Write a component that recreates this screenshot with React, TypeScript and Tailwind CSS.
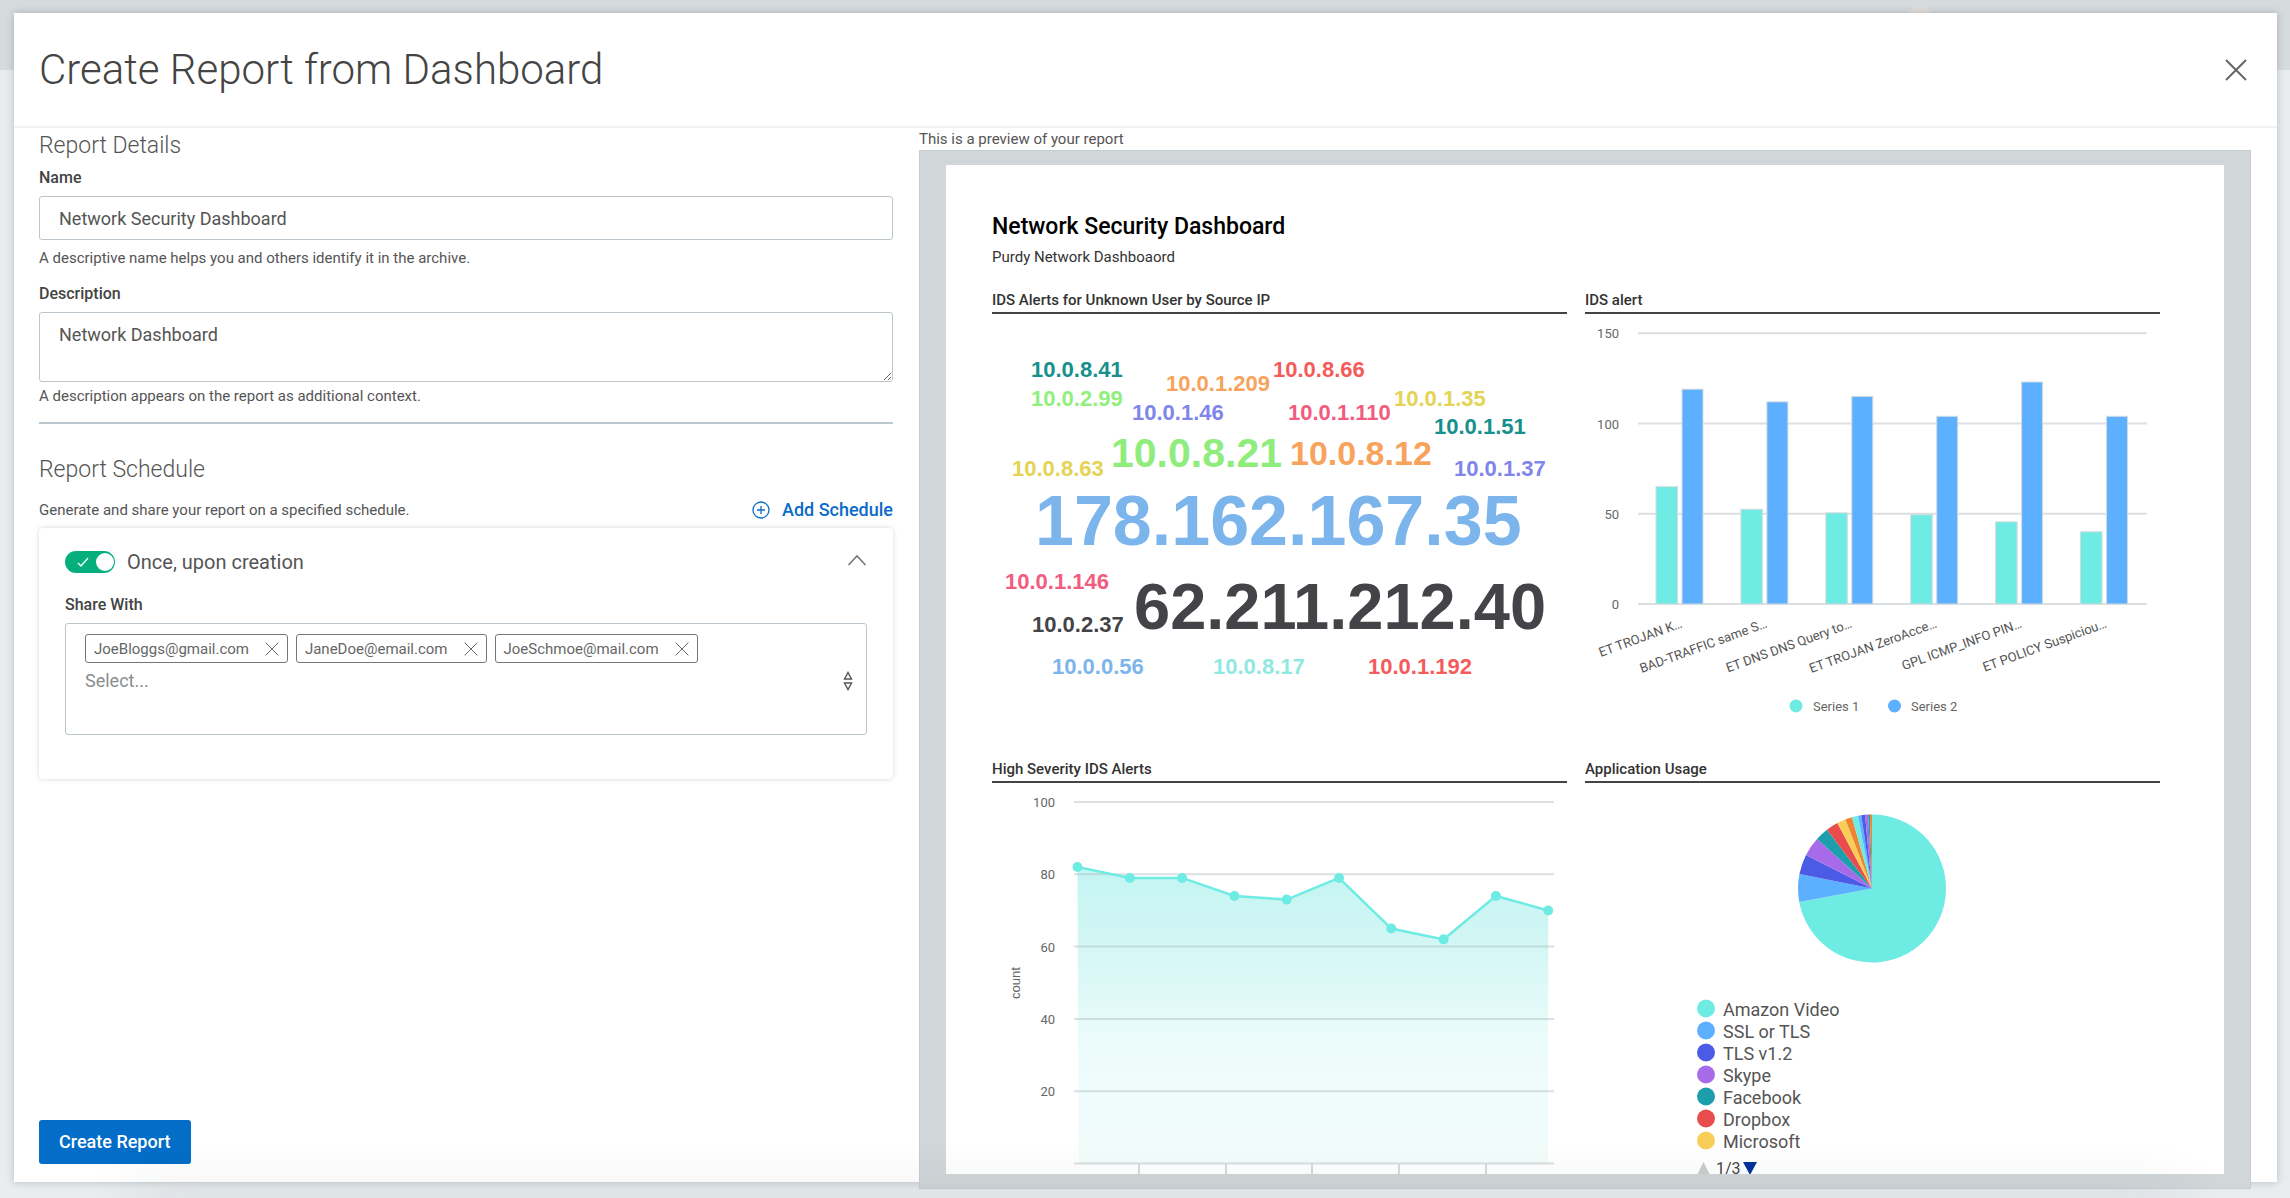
import { useState } from "react";
import type { KeyboardEvent, ReactNode } from "react";

type Word = { text: string; x: number; y: number; size: number; color: string };

const words: Word[] = [
  { text: "10.0.8.41", x: 39, y: 63, size: 22, color: "#15908c" },
  { text: "10.0.2.99", x: 39, y: 92, size: 22, color: "#8ff07d" },
  { text: "10.0.1.209", x: 174, y: 77, size: 22, color: "#f7a35c" },
  { text: "10.0.8.66", x: 281, y: 63, size: 22, color: "#f45b5b" },
  { text: "10.0.1.46", x: 140, y: 106, size: 22, color: "#8085e9" },
  { text: "10.0.1.110", x: 296, y: 106, size: 22, color: "#f15c80" },
  { text: "10.0.1.35", x: 402, y: 92, size: 22, color: "#e4d354" },
  { text: "10.0.1.51", x: 442, y: 120, size: 22, color: "#15908c" },
  { text: "10.0.8.21", x: 119, y: 153, size: 41, color: "#90ed7d" },
  { text: "10.0.8.12", x: 298, y: 151, size: 34, color: "#f7a35c" },
  { text: "10.0.8.63", x: 20, y: 162, size: 22, color: "#e4d354" },
  { text: "10.0.1.37", x: 462, y: 162, size: 22, color: "#8085e9" },
  { text: "178.162.167.35", x: 43, y: 231, size: 70, color: "#7cb5ec" },
  { text: "10.0.1.146", x: 13, y: 275, size: 22, color: "#f15c80" },
  { text: "10.0.2.37", x: 40, y: 318, size: 22, color: "#434348" },
  { text: "62.211.212.40", x: 142, y: 315, size: 65, color: "#434348" },
  { text: "10.0.0.56", x: 60, y: 360, size: 22, color: "#7cb5ec" },
  { text: "10.0.8.17", x: 221, y: 360, size: 22, color: "#91e8e1" },
  { text: "10.0.1.192", x: 376, y: 360, size: 22, color: "#f45b5b" },
];

const alerts = [
  { label: "ET TROJAN K…", first: 65, second: 119 },
  { label: "BAD-TRAFFIC same S…", first: 52.5, second: 112 },
  { label: "ET DNS DNS Query to…", first: 50.5, second: 115 },
  { label: "ET TROJAN ZeroAcce…", first: 49.5, second: 104 },
  { label: "GPL ICMP_INFO PIN…", first: 45.5, second: 123 },
  { label: "ET POLICY Suspiciou…", first: 40, second: 104 },
];

const counts = [82, 79, 79, 74, 73, 79, 65, 62, 74, 70];

// end angle of every slice, clockwise from 12 o'clock
const slices = [
  { end: 259.5, color: "#6eebe3" },
  { end: 281.3, color: "#5cb0ff" },
  { end: 296.9, color: "#4b5be6" },
  { end: 312, color: "#a76bea" },
  { end: 322.5, color: "#1c9eac" },
  { end: 332.1, color: "#e84c4c" },
  { end: 338.9, color: "#f9ce58" },
  { end: 344.3, color: "#ef8534" },
  { end: 349.1, color: "#6eebe3" },
  { end: 351.7, color: "#5cb0ff" },
  { end: 354.6, color: "#4b5be6" },
  { end: 357, color: "#a76bea" },
  { end: 358.4, color: "#1c9eac" },
  { end: 360, color: "#ef8534" },
];

const apps = [
  { name: "Amazon Video", color: "#6eebe3" },
  { name: "SSL or TLS", color: "#5cb0ff" },
  { name: "TLS v1.2", color: "#4b5be6" },
  { name: "Skype", color: "#a76bea" },
  { name: "Facebook", color: "#1c9eac" },
  { name: "Dropbox", color: "#e84c4c" },
  { name: "Microsoft", color: "#f9ce58" },
];

function WordCloud() {
  return (
    <svg viewBox="0 0 575 445" className="w-full block font-['Liberation_Sans',Arial,sans-serif] font-bold">
      {words.map((w) => (
        <text key={w.text} x={w.x} y={w.y} fontSize={w.size} fill={w.color}>
          {w.text}
        </text>
      ))}
    </svg>
  );
}

function BarChart() {
  const y = (v: number) => 290 - v * 1.805;

  return (
    <svg viewBox="0 0 575 445" className="w-full block" fontSize={13}>
      {[150, 100, 50, 0].map((v) => (
        <g key={v}>
          <line x1={53} x2={562} y1={y(v)} y2={y(v)} stroke="#dbdfe1" strokeWidth={2} />
          <text x={34} y={y(v) + 5} textAnchor="end" fill="#666">{v}</text>
        </g>
      ))}
      {alerts.map((a, i) => {
        const x = 71 + i * 84.9;
        return (
          <g key={a.label}>
            <rect x={x} y={y(a.first)} width={21.5} height={y(0) - y(a.first)} fill="#6eebe3" stroke="#d5dbdd" />
            <rect x={x + 26} y={y(a.second)} width={21} height={y(0) - y(a.second)} fill="#5cb0ff" stroke="#d5dbdd" />
            <text textAnchor="end" fill="#555" transform={`translate(${x + 27} 313) rotate(-20)`}>
              {a.label}
            </text>
          </g>
        );
      })}
      <circle cx={211} cy={392} r={6.5} fill="#6eebe3" />
      <text x={228} y={397} fill="#666">Series 1</text>
      <circle cx={309.5} cy={392} r={6.5} fill="#5cb0ff" />
      <text x={326} y={397} fill="#666">Series 2</text>
    </svg>
  );
}

function LineChart() {
  const y = (v: number) => 380.5 - v * 3.615;
  const points = counts.map((c, i) => [85.5 + i * 52.3, y(c)]);
  const line = points.map((p) => p.join(",")).join(" ");

  return (
    <svg viewBox="0 0 575 445" className="w-full block" fontSize={13}>
      <defs>
        <linearGradient id="area" x1="0" y1="0" x2="0" y2="1">
          <stop offset="0" stopColor="#c3f5f2" />
          <stop offset="0.25" stopColor="#d2f6f4" />
          <stop offset="0.6" stopColor="#ecfcfb" />
          <stop offset="1" stopColor="#f2fcfb" />
        </linearGradient>
      </defs>
      <polygon points={`86.5,380.5 ${line} 556.2,380.5`} fill="url(#area)" />
      {[100, 80, 60, 40, 20, 0].map((v) => (
        <g key={v}>
          <line x1={82} x2={562} y1={y(v)} y2={y(v)} stroke="#a9b6ba" strokeOpacity={0.42} strokeWidth={2} />
          <text x={63} y={y(v) + 5} textAnchor="end" fill="#666">{v > 0 ? v : ""}</text>
        </g>
      ))}
      {[147, 234, 320, 407, 494].map((x) => (
        <line key={x} x1={x} x2={x} y1={381} y2={400} stroke="#d5dbdd" strokeWidth={2} />
      ))}
      <polyline points={line} fill="none" stroke="#6eebe3" strokeWidth={2.5} />
      {points.map(([px, py]) => (
        <circle key={px} cx={px} cy={py} r={5} fill="#6eebe3" />
      ))}
      <text
        textAnchor="middle"
        fill="#666"
        transform="translate(28 200) rotate(-90)"
        className="font-['Liberation_Sans',Arial,sans-serif]"
      >
        count
      </text>
    </svg>
  );
}

function PieChart() {
  const point = (deg: number) => {
    const rad = (deg * Math.PI) / 180;
    return `${287 + 74 * Math.sin(rad)} ${105.5 - 74 * Math.cos(rad)}`;
  };

  return (
    <svg viewBox="0 0 575 445" className="w-full block" fontSize={18}>
      {slices.map((s, i) => {
        const start = i === 0 ? 0 : slices[i - 1].end;
        return (
          <path
            key={s.end}
            d={`M287 105.5 L${point(start)} A74 74 0 ${s.end - start > 180 ? 1 : 0} 1 ${point(s.end)} Z`}
            fill={s.color}
          />
        );
      })}
      {apps.map((a, i) => (
        <g key={a.name}>
          <circle cx={121} cy={225.5 + i * 22} r={9} fill={a.color} />
          <text x={138} y={233 + i * 22} fill="#555">{a.name}</text>
        </g>
      ))}
      <path d="M112 392 L118.500 379 L125 392 Z" fill="#ccc" />
      <text x={131} y={391} fontSize={16} fill="#444">1/3</text>
      <path d="M158 379 H172 L165 392 Z" fill="#039" />
    </svg>
  );
}

function Widget({ title, children }: { title: string; children: ReactNode }) {
  return (
    <section>
      <h3 className="text-[15px] leading-5 font-medium text-[#333] pb-0.5 border-b-2 border-[#444]">{title}</h3>
      {children}
    </section>
  );
}

function CrossIcon({ className }: { className: string }) {
  return (
    <svg viewBox="0 0 22 22" className={className} fill="none" stroke="currentColor">
      <path d="M1 1 L21 21 M21 1 L1 21" vectorEffect="non-scaling-stroke" />
    </svg>
  );
}

export default function App() {
  const [name, setName] = useState("Network Security Dashboard");
  const [description, setDescription] = useState("Network Dashboard");
  const [once, setOnce] = useState(true);
  const [expanded, setExpanded] = useState(true);
  const [emails, setEmails] = useState(["JoeBloggs@gmail.com", "JaneDoe@email.com", "JoeSchmoe@mail.com"]);
  const [draft, setDraft] = useState("");

  const addEmail = (e: KeyboardEvent<HTMLInputElement>) => {
    if (e.key !== "Enter" || !draft.trim()) return;
    e.preventDefault();
    setEmails([...emails, draft.trim()]);
    setDraft("");
  };

  return (
    <div className="relative h-screen overflow-hidden pt-[13px] pl-3.5 pr-[13px] pb-4 bg-[linear-gradient(#d6dbde_70px,#e9edf0_70px)] font-['Roboto',sans-serif] text-[#555]">
      <div className="absolute top-1.5 left-[1907px] w-[26px] h-3 rounded-t-full bg-[#e3dedb]" />

      <main className="relative h-full flex flex-col bg-white shadow-[0_0_8px_rgba(60,80,90,0.3)]">
        <header className="h-[115px] shrink-0 flex items-center justify-between pl-[25px] pr-[30px] border-b-2 border-[#f2f2f2]">
          <h1 className="text-[42px] leading-none font-light text-[#444]">Create Report from Dashboard</h1>
          <button type="button" aria-label="Close" className="text-[#666]">
            <CrossIcon className="w-[22px] h-[22px] stroke-2" />
          </button>
        </header>

        <div className="flex-1 min-h-0 grid grid-cols-[854fr_1332fr] gap-[26px] pl-[25px] pr-[26px]">
          <form className="min-h-0 flex flex-col pt-1 pb-[18px]" onSubmit={(e) => e.preventDefault()}>
            <h2 className="text-[23px] leading-7 font-light">Report Details</h2>

            <label htmlFor="name" className="mt-2 text-base leading-5 font-medium text-[#444]">Name</label>
            <input
              id="name"
              value={name}
              onChange={(e) => setName(e.target.value)}
              className="mt-2 h-11 px-[19px] text-lg border border-[#bcc7cd] rounded-[3px] outline-none"
            />
            <p className="mt-2 text-[15px] leading-5">A descriptive name helps you and others identify it in the archive.</p>

            <label htmlFor="description" className="mt-4 text-base leading-5 font-medium text-[#444]">Description</label>
            <textarea
              id="description"
              value={description}
              onChange={(e) => setDescription(e.target.value)}
              className="mt-2 h-[70px] shrink-0 px-[19px] py-3 text-lg leading-5 border border-[#bcc7cd] rounded-[3px] outline-none resize-y"
            />
            <p className="mt-1 text-[15px] leading-5">A description appears on the report as additional context.</p>

            <hr className="mt-4 border-t-2 border-[#bdc8ce]" />

            <h2 className="mt-8 text-[23px] leading-7 font-light">Report Schedule</h2>
            <div className="mt-4 flex items-center justify-between leading-5">
              <p className="text-[15px]">Generate and share your report on a specified schedule.</p>
              <button type="button" className="flex items-center gap-3 text-lg leading-5 font-medium text-[#0b6bcb]">
                <svg viewBox="0 0 18 18" className="w-[18px] h-[18px]" fill="none" stroke="currentColor" strokeWidth={1.3}>
                  <circle cx={9} cy={9} r={8} />
                  <path d="M9 5 V13 M5 9 H13" />
                </svg>
                Add Schedule
              </button>
            </div>

            <section className="mt-2 px-[26px] pt-[23px] pb-11 rounded shadow-[0_0_5px_rgba(0,0,0,0.16)]">
              <div className="flex items-center justify-between h-[22px]">
                <label className="flex items-center gap-3 text-xl text-[#555]">
                  <span className="relative block w-[50px] h-[22px]">
                    <input
                      type="checkbox"
                      checked={once}
                      onChange={(e) => setOnce(e.target.checked)}
                      className="peer block w-full h-full appearance-none rounded-full bg-gray-400 checked:bg-[#04af7d]"
                    />
                    <svg viewBox="0 0 12 10" className="absolute top-1.5 left-3 w-3 h-2.5 hidden peer-checked:block" fill="none" stroke="#fff" strokeWidth={1.3}>
                      <path d="M1 6 L4 9 L11 1" />
                    </svg>
                    <span className="absolute top-0.5 left-0.5 peer-checked:left-[31px] w-[18px] h-[18px] rounded-full bg-white" />
                  </span>
                  Once, upon creation
                </label>
                <button type="button" aria-label="Toggle details" className="pb-1" onClick={() => setExpanded(!expanded)}>
                  <svg viewBox="0 0 20 12" className={`w-5 h-3 ${expanded ? "" : "rotate-180"}`} fill="none" stroke="#777" strokeWidth={1.6}>
                    <path d="M1.500 11 L10 2 L18.500 11" />
                  </svg>
                </button>
              </div>

              {expanded && (
                <>
                  <label htmlFor="share" className="block mt-[22px] text-base leading-5 font-medium text-[#444]">Share With</label>
                  <div className="mt-2 h-28 pl-[19px] pr-3 pt-2.5 border border-[#bcc7cd] rounded-[3px]">
                    <ul className="flex flex-wrap gap-2">
                      {emails.map((email) => (
                        <li key={email} className="h-[29px] flex items-center gap-4 px-2 text-[15px] leading-5 text-[#666] border border-[#777] rounded-[3px]">
                          {email}
                          <button type="button" aria-label={`Remove ${email}`} onClick={() => setEmails(emails.filter((m) => m !== email))}>
                            <CrossIcon className="w-3.5 h-3.5" />
                          </button>
                        </li>
                      ))}
                    </ul>
                    <div className="mt-2 flex items-center">
                      <input
                        id="share"
                        value={draft}
                        placeholder="Select..."
                        onChange={(e) => setDraft(e.target.value)}
                        onKeyDown={addEmail}
                        className="flex-1 h-5 text-lg leading-5 outline-none placeholder:text-[#8c8c8c]"
                      />
                      <svg viewBox="0 0 12 20" className="w-3 h-5" fill="none" stroke="#555" strokeWidth={1.4}>
                        <path d="M2.500 8 L6 1.500 L9.500 8 Z M2.500 12 L6 18.500 L9.500 12 Z" />
                      </svg>
                    </div>
                  </div>
                </>
              )}
            </section>

            <button type="submit" className="mt-auto self-start h-11 px-5 rounded-[3px] bg-[#036dc7] text-white text-lg font-medium">
              Create Report
            </button>
          </form>

          <div className="min-h-0 min-w-0 -mb-[7px] pt-px flex flex-col">
            <p className="text-[15px] leading-5">This is a preview of your report</p>
            <div className="mt-px flex-1 min-h-0 flex flex-col px-[26px] pt-3.5 pb-3.5 bg-[#d1d6d9] border border-[#c5ced3]">
              <article className="flex-1 min-h-0 overflow-hidden bg-white pl-[46px] pr-16 pt-12">
                <h2 className="text-[23px] leading-7 font-medium text-black">Network Security Dashboard</h2>
                <p className="mt-1.5 text-[15px] leading-5 text-[#333]">Purdy Network Dashboaord</p>
                <div className="mt-[23px] grid grid-cols-2 gap-x-[18px]">
                  <Widget title="IDS Alerts for Unknown User by Source IP">
                    <WordCloud />
                  </Widget>
                  <Widget title="IDS alert">
                    <BarChart />
                  </Widget>
                  <Widget title="High Severity IDS Alerts">
                    <LineChart />
                  </Widget>
                  <Widget title="Application Usage">
                    <PieChart />
                  </Widget>
                </div>
              </article>
            </div>
          </div>
        </div>
      </main>

      {/* soft shade along the bottom edge */}
      <div className="pointer-events-none absolute -bottom-4 left-[130px] right-[110px] h-4 shadow-[0_0_56px_rgba(40,50,55,0.2)]" />
    </div>
  );
}
